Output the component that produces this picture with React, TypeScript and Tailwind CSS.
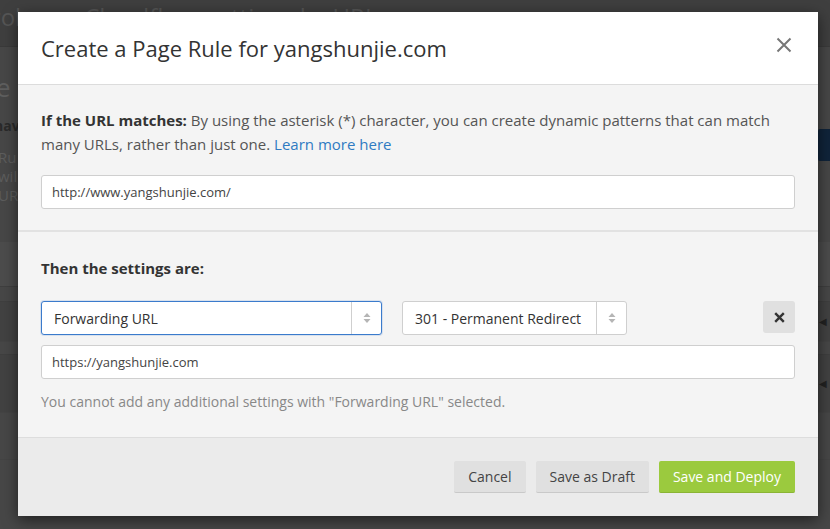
import { useState } from "react";

const font = { fontFamily: '"Open Sans", "Noto Sans", Arial, sans-serif' };

function SelectArrows() {
  return (
    <svg width="8" height="12" viewBox="0 0 8 12" className="block">
      <path d="M4 1 L7.5 5 L0.5 5 Z" fill="#b5b5b5" />
      <path d="M4 11 L7.5 7 L0.5 7 Z" fill="#b5b5b5" />
    </svg>
  );
}

function FakeSelect({ value, width, focused }: { value: string; width: string; focused?: boolean }) {
  return (
    <div
      className={`${width} h-[34px] flex bg-white rounded-[3px] border ${
        focused ? "border-[#3b7bcc] shadow-[0_0_0_1px_rgba(59,123,204,0.15)]" : "border-[#cfcfcf]"
      }`}
    >
      <div className="flex-1 flex items-center px-3 text-[14px] text-[#333] truncate">{value}</div>
      <div className="w-[30px] flex items-center justify-center border-l border-[#cfcfcf]">
        <SelectArrows />
      </div>
    </div>
  );
}

function BackgroundPage() {
  return (
    <div className="h-full flex flex-col text-[#6a6a6a]">
      {/* top bar, dimmed */}
      <div className="h-[47px] bg-[#3f3f3f] border-b border-[#3a3a3a] pt-[5px] overflow-hidden">
        <div className="-ml-[62px] text-[24px] leading-[24px] text-[#555] whitespace-nowrap">
          Control<span className="ml-[63px]">Cloudflare settings by URL</span>
        </div>
      </div>
      <div className="flex">
        <div className="w-[18px] overflow-hidden">
          <div className="-ml-[4px] pt-[25px] text-[26px] leading-[30px] text-[#5f5f5f]">e</div>
          <div className="-ml-[6px] pt-[14px] text-[14px] leading-[20px] font-bold text-[#2a2a2a]">hav</div>
          <div className="-ml-[2px] pt-[12px] text-[15px] leading-[19px] text-[#5d5d5d] whitespace-nowrap">
            <div>Ru</div>
            <div>will</div>
            <div>UR</div>
          </div>
        </div>
        <div className="flex-1" />
        <div className="w-[12px] pt-[82px]">
          <div className="h-[32px] bg-[#10243a] rounded-l-[2px]" />
        </div>
      </div>
      <div className="mt-[37px] flex flex-col">
        <div className="h-[44px] bg-[#4c4c4c]" />
        <div className="h-[15px] border-t border-[#3f3f3f]" />
        <div className="h-[40px] border-t border-[#3f3f3f] bg-[#424242] flex justify-end items-center pr-[3px] text-[#222] text-[10px]">◀</div>
        <div className="h-[13px] border-t border-[#444]" />
        <div className="h-[58px] border-t border-[#3f3f3f] bg-[#424242] flex justify-end items-center pr-[3px] text-[#222] text-[10px]">◀</div>
        <div className="h-[47px] border-t border-[#444]" />
        <div className="h-[30px] border-t border-[#444]" />
      </div>
    </div>
  );
}

export default function App() {
  const [url, setUrl] = useState("http://www.yangshunjie.com/");
  const [forward, setForward] = useState("https://yangshunjie.com");

  return (
    <div className="relative w-full h-[529px] overflow-hidden bg-[#474747]" style={font}>
      <BackgroundPage />

      {/* Modal */}
      <div className="absolute left-[18px] top-[12px] w-[800px] h-[504px] flex flex-col bg-white shadow-[0_4px_14px_rgba(0,0,0,0.55)]">
        {/* Header */}
        <div className="h-[73px] shrink-0 flex items-center justify-between pl-[23px] pr-[26px] border-b border-[#dcdcdc]">
          <h2 className="text-[22px] text-[#333] font-normal">Create a Page Rule for yangshunjie.com</h2>
          <button className="text-[#777] -mt-[6px]" aria-label="Close">
            <svg width="16" height="16" viewBox="0 0 16 16" className="block">
              <path d="M1.5 1.5 L14.5 14.5 M14.5 1.5 L1.5 14.5" stroke="#777" strokeWidth="2" />
            </svg>
          </button>
        </div>

        {/* URL match */}
        <div className="h-[147px] shrink-0 bg-[#f4f4f4] px-[23px] pt-[23px] border-b-2 border-[#e2e2e2]">
          <p className="text-[15px] leading-[24px] text-[#555]">
            <strong className="text-[#333] font-bold">If the URL matches:</strong> By using the asterisk (*) character, you
            can create dynamic patterns that can match many URLs, rather than just one.{" "}
            <a className="text-[#2f7bc2]" href="#">
              Learn more here
            </a>
          </p>
          <input
            value={url}
            onChange={(e) => setUrl(e.target.value)}
            className="mt-[19px] w-full h-[34px] bg-white border border-[#cfcfcf] rounded-[3px] px-[10px] text-[13px] text-[#444] outline-none block"
          />
        </div>

        {/* Settings */}
        <div className="flex-1 bg-[#f4f4f4] px-[23px] pt-[25px] border-b border-[#dddddd]">
          <div className="text-[15px] font-bold text-[#333] leading-[22px]">Then the settings are:</div>
          <div className="mt-[22px] flex items-start">
            <FakeSelect value="Forwarding URL" width="w-[341px]" focused />
            <div className="ml-[20px]">
              <FakeSelect value="301 - Permanent Redirect" width="w-[225px]" />
            </div>
            <div className="flex-1" />
            <button className="w-[32px] h-[32px] bg-[#e0e0e0] rounded-[3px] flex items-center justify-center" aria-label="Remove">
              <svg width="11" height="11" viewBox="0 0 11 11">
                <path d="M1.2 1.2 L9.8 9.8 M9.8 1.2 L1.2 9.8" stroke="#333" strokeWidth="2.4" />
              </svg>
            </button>
          </div>
          <input
            value={forward}
            onChange={(e) => setForward(e.target.value)}
            className="mt-[10px] w-full h-[34px] bg-white border border-[#cfcfcf] rounded-[3px] px-[10px] text-[13px] text-[#444] outline-none block"
          />
          <p className="mt-[12px] text-[14px] leading-[22px] text-[#888]">
            You cannot add any additional settings with "Forwarding URL" selected.
          </p>
        </div>

        {/* Footer */}
        <div className="h-[78px] shrink-0 bg-[#ebebeb] flex items-center justify-end gap-[10px] pr-[23px]">
          <button className="h-[32px] px-[14px] rounded-[2px] bg-[#e0e0e0] border-b border-[#c9c9c9] text-[14px] text-[#444]">
            Cancel
          </button>
          <button className="h-[32px] px-[14px] rounded-[2px] bg-[#e0e0e0] border-b border-[#c9c9c9] text-[14px] text-[#444]">
            Save as Draft
          </button>
          <button className="h-[32px] px-[14px] rounded-[2px] bg-[#9bca3e] border-b border-[#8ab435] text-[14px] text-white">
            Save and Deploy
          </button>
        </div>
      </div>
    </div>
  );
}
